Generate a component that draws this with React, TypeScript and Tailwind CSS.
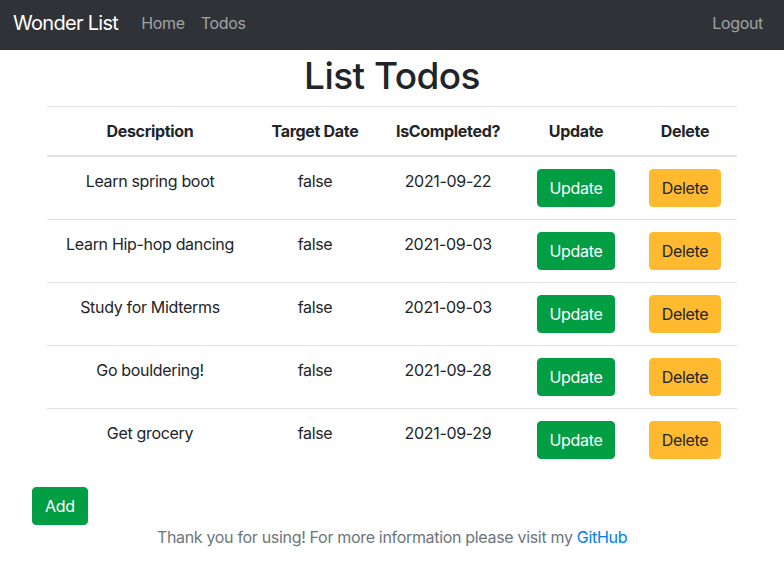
import React from "react";

const todos = [
  { d: "Learn spring boot", t: "false", c: "2021-09-22" },
  { d: "Learn Hip-hop dancing", t: "false", c: "2021-09-03" },
  { d: "Study for Midterms", t: "false", c: "2021-09-03" },
  { d: "Go bouldering!", t: "false", c: "2021-09-28" },
  { d: "Get grocery", t: "false", c: "2021-09-29" },
];

export default function App() {
  return (
    <div className="min-h-[573px] bg-white text-[#212529] text-[16px] leading-[24px] tracking-[-0.02em]" style={{ fontFamily: "Inter, 'Noto Sans', sans-serif" }}>
      <nav className="h-[50px] bg-[#2f3338] flex items-center pl-[13px] pr-[13px] pb-[5px]">
        <span className="text-white text-[20px] leading-[30px] mr-[15px] tracking-[-0.035em]">Wonder List</span>
        <a className="px-2 text-[#ffffff8c]">Home</a>
        <a className="px-2 text-[#ffffff8c]">Todos</a>
        <div className="flex-1" />
        <a className="px-2 text-[#ffffff8c]">Logout</a>
      </nav>
      <div className="w-[690px] mx-auto">
        <h1 className="text-[37px] leading-[48px] font-medium text-center mt-[2px] mb-[6px] tracking-[-0.015em]">List Todos</h1>
        <table className="w-[690px] border-collapse table-fixed">
          <colgroup>
            <col className="w-[206px]" />
            <col className="w-[124px]" />
            <col className="w-[142px]" />
            <col className="w-[114px]" />
            <col className="w-[104px]" />
          </colgroup>
          <thead>
            <tr>
              {["Description", "Target Date", "IsCompleted?", "Update", "Delete"].map((h) => (
                <th key={h} className="border-t border-b-2 border-[#dee2e6] p-3 font-bold text-center align-bottom">{h}</th>
              ))}
            </tr>
          </thead>
          <tbody>
            {todos.map((r) => (
              <tr key={r.d}>
                <td className="border-t border-[#dee2e6] p-3 text-center align-top">{r.d}</td>
                <td className="border-t border-[#dee2e6] p-3 text-center align-top">{r.t}</td>
                <td className="border-t border-[#dee2e6] p-3 text-center align-top">{r.c}</td>
                <td className="border-t border-[#dee2e6] p-3 text-center align-top">
                  <button className="bg-[#029e43] text-white border border-[#029e43] rounded-[4px] px-3 py-[6px] leading-[24px]">Update</button>
                </td>
                <td className="border-t border-[#dee2e6] p-3 text-center align-top">
                  <button className="bg-[#ffba2f] text-[#212529] border border-[#ffba2f] rounded-[4px] px-3 py-[6px] leading-[24px]">Delete</button>
                </td>
              </tr>
            ))}
          </tbody>
        </table>
      </div>
      <div className="pl-[32px] mt-4">
        <button className="bg-[#029e43] text-white border border-[#029e43] rounded-[4px] px-3 py-[6px] leading-[24px]">Add</button>
      </div>
      <div className="text-center text-[#6c757d]">
        Thank you for using! For more information please visit my <a className="text-[#007bff]">GitHub</a>
      </div>
    </div>
  );
}
